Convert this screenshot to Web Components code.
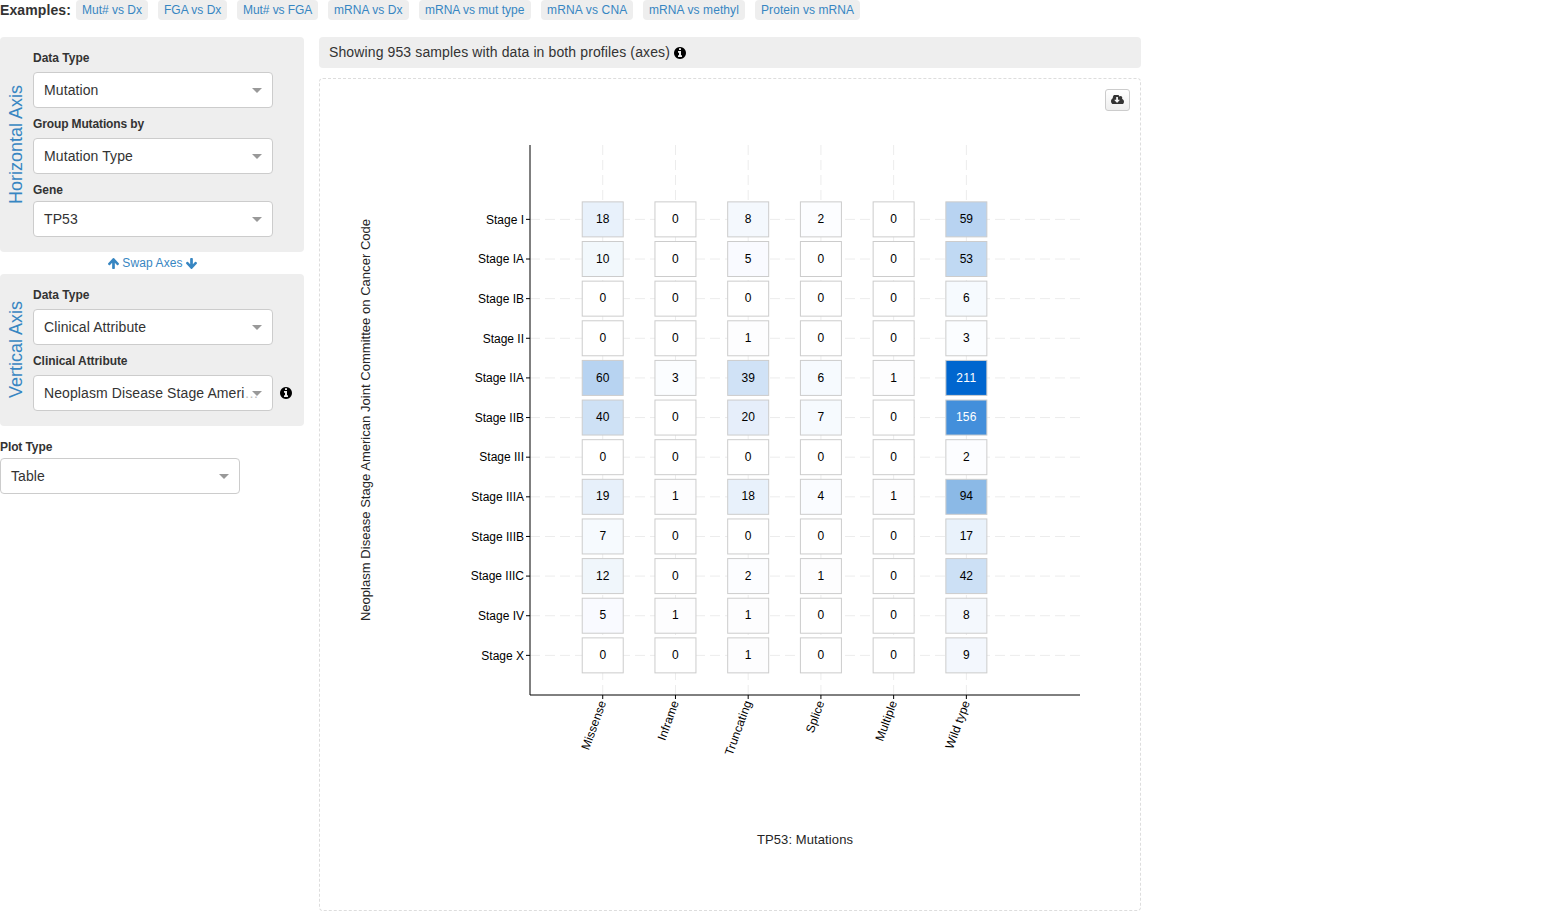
<!DOCTYPE html>
<html lang="en">
<head>
<meta charset="utf-8">
<title>Plots</title>
<style>
html,body{margin:0;background:#fff}
body{font-family:"Liberation Sans",Arial,sans-serif;font-size:14px;line-height:20px;color:#333;overflow:hidden}
</style>
</head>
<body>
<plots-tab></plots-tab>
<script>
const ICONS = {
  info: ['128 128 1536 1536','M1152 1376v-160q0-14-9-23t-23-9h-96v-512q0-14-9-23t-23-9h-320q-14 0-23 9t-9 23v160q0 14 9 23t23 9h96v320h-96q-14 0-23 9t-9 23v160q0 14 9 23t23 9h448q14 0 23-9t9-23zm-128-896v-160q0-14-9-23t-23-9h-192q-14 0-23 9t-9 23v160q0 14 9 23t23 9h192q14 0 23-9t9-23zm640 416q0 209-103 385.5t-279.5 279.5-385.5 103-385.5-103-279.5-279.5-103-385.5 103-385.5 279.5-279.5 385.5-103 385.5 103 279.5 279.5 103 385.5z'],
  cloud: ['-64 256 1920 1280','M1216 928q0-14-9-23t-23-9h-224v-352q0-13-9.5-22.5t-22.5-9.5h-192q-13 0-22.5 9.5t-9.5 22.5v352h-224q-13 0-22.5 9.5t-9.5 22.5q0 14 9 23l352 352q9 9 23 9t23-9l351-351q10-12 10-24zm640 224q0 159-112.5 271.5t-271.5 112.5h-1088q-185 0-316.5-131.5t-131.5-316.5q0-130 70-240t188-165q-2-30-2-43 0-212 150-362t362-150q156 0 285.5 87t188.5 231q71-62 166-62 106 0 181 75t75 181q0 76-41 138 130 31 213.5 135.5t83.5 238.5z'],
  arrow: ['118 192 1557 1472','M1675 971q0 51-37 90l-75 75q-38 38-91 38-54 0-90-38l-294-293v704q0 52-37.5 84.5t-90.5 32.5h-128q-53 0-90.5-32.5t-37.5-84.5v-704l-294 293q-36 38-90 38t-90-38l-75-75q-38-38-38-90 0-53 38-91l651-651q35-37 90-37 54 0 91 37l651 651q37 39 37 91z']
};
function define(name, html) {
  customElements.define(name, class extends HTMLElement {
    constructor() {
      super();
      const t = document.createElement('template');
      t.innerHTML = typeof html === 'function' ? html(this) : html;
      this.attachShadow({mode:'open'}).append(t.content.cloneNode(true));
    }
  });
}

define('fa-icon', el => {
  const [box, d] = ICONS[el.getAttribute('name')];
  return `<style>:host{display:inline-block;width:12px;height:12px;line-height:0;flex:none}
  svg{display:block;width:100%;height:100%;fill:currentColor}:host([down]) svg{transform:rotate(180deg)}</style>
  <svg viewBox="${box}" preserveAspectRatio="none"><path d="${d}"/></svg>`;
});

define('example-link', el => `<style>
:host{display:block;box-sizing:border-box;width:${el.getAttribute('width')}px;height:20px;padding-left:6px;margin-right:10px;border-radius:4px;background:#eee;color:#3786c2;font-size:12px;line-height:20px;white-space:nowrap;letter-spacing:${el.getAttribute('track')||0}px}
</style><slot></slot>`);

define('select-box', `<style>
:host{display:flex;box-sizing:border-box;width:240px;height:36px;border:1px solid #ccc;border-radius:4px;background:#fff;align-items:center;position:relative}
span{flex:1;min-width:0;padding-left:10px;overflow:hidden;white-space:nowrap;line-height:34px;letter-spacing:.1px}
i{position:absolute;right:10px;top:15px;border:5px solid transparent;border-top-color:#999;border-bottom:0}
</style><span><slot></slot></span><i></i>`);

define('select-field', el => `<style>
:host{display:block}
b{display:block;font-size:12px;line-height:18px;height:${el.getAttribute('gap')||23}px;letter-spacing:${el.getAttribute('track')||0}px}
div{display:flex;align-items:center}
fa-icon{margin-left:7px;color:#000}
</style><b>${el.getAttribute('label')}</b><div><select-box><slot></slot></select-box>${el.hasAttribute('info')?'<fa-icon name="info"></fa-icon>':''}</div>`);

define('axis-panel', el => `<style>
:host{display:flex;box-sizing:border-box;width:304px;background:#eee;border-radius:4px;padding:12px 0 15px}
.t{width:33px;box-sizing:border-box;padding:${el.getAttribute('shift')}px 2px 0 0;display:flex;align-items:center;justify-content:center}
.t span{writing-mode:vertical-rl;transform:rotate(180deg);font-size:18px;line-height:20px;color:#3786c2;white-space:nowrap}
.f{display:flex;flex-direction:column;gap:7px}
</style><div class="t"><span>${el.getAttribute('label')}</span></div><div class="f"><slot></slot></div>`);

/* Table plot: mutation types (columns) against cancer stages (rows) */
const COLS = ['Missense','Inframe','Truncating','Splice','Multiple','Wild type'];
const ROWS = [
 ['Stage I',18,0,8,2,0,59],['Stage IA',10,0,5,0,0,53],['Stage IB',0,0,0,0,0,6],['Stage II',0,0,1,0,0,3],
 ['Stage IIA',60,3,39,6,1,211],['Stage IIB',40,0,20,7,0,156],['Stage III',0,0,0,0,0,2],['Stage IIIA',19,1,18,4,1,94],
 ['Stage IIIB',7,0,0,0,0,17],['Stage IIIC',12,0,2,1,0,42],['Stage IV',5,1,1,0,0,8],['Stage X',0,0,1,0,0,9]];
const FILL = {0:'#fff',1:'#fdfdfe',2:'#fcfdff',3:'#fbfdff',4:'#fafcff',5:'#f9faff',6:'#f6fafe',7:'#f6fafe',8:'#f4f8fd',9:'#f3f7fd',
 10:'#f2f8fc',12:'#f0f6fb',17:'#e9f2fb',18:'#e8f1fb',19:'#e7f0fa',20:'#e6eefa',39:'#d0e2f6',40:'#cee1f5',42:'#cce0f5',
 53:'#c0d9f3',59:'#b8d3f1',60:'#b7d3f1',94:'#8bb9e6',156:'#438fdb',211:'#0066cf'};
define('table-plot', () => {
  const X = i => 530 + (i+1)*72.727, Y = i => 695 - (12-i)*39.636;
  let g = '';
  COLS.forEach((c,i) => {
    g += `<path class="grid" d="M${X(i)} 145V695"/><path class="tick" d="M${X(i)} 695v4"/>
    <text class="col" text-anchor="end" transform="translate(${X(i)+3.7} 702.3) rotate(-70)" y="0">${c}</text>`;
  });
  ROWS.forEach((r,i) => {
    g += `<path class="grid" d="M530 ${Y(i)}H1080"/><path class="tick" d="M530 ${Y(i)}h-4"/>
    <text text-anchor="end" x="524" y="${Y(i)+4.3}">${r[0]}</text>`;
  });
  g += '<path class="axis" d="M530 145V695M530 695H1080"/>';
  ROWS.forEach((r,i) => r.slice(1).forEach((v,j) => {
    g += `<rect x="${X(j)-20.5}" y="${Y(i)-17.5}" width="41" height="35" fill="${FILL[v]}"/>
    <text text-anchor="middle" x="${X(j)}" y="${Y(i)+3.6}"${v>150?' fill="#fff"':''}>${v}</text>`;
  }));
  return `<style>:host{display:block;width:820px;height:831px}
  svg{display:block}text{font-size:12px;fill:#000}text[fill]{fill:#fff;letter-spacing:.3px}text.title{font-size:13px;fill:#252525}
  .col{letter-spacing:.12px}
  .grid{stroke:#ececec;stroke-dasharray:10 5;fill:none}.tick,.axis{stroke:#000;fill:none}rect{stroke:#ccc}</style>
  <svg width="820" height="831" viewBox="320 79 820 831">${g}
  <text class="title" text-anchor="middle" x="805" y="844" letter-spacing=".1">TP53: Mutations</text>
  <text class="title" text-anchor="middle" letter-spacing=".03" transform="translate(370 420) rotate(-90)">Neoplasm Disease Stage American Joint Committee on Cancer Code</text></svg>`;
});

define('download-button', `<style>
:host{box-sizing:border-box;width:25px;height:22px;border:1px solid #ccc;border-radius:3px;background:linear-gradient(#fff,#eee);display:flex;justify-content:center;color:#333}
fa-icon{width:13px;height:9.6px;margin-top:4.5px}
</style><fa-icon name="cloud"></fa-icon>`);

define('plots-tab', `<style>
:host{display:block;height:911px}
header{display:flex;height:20px;margin-bottom:17px}
header b{width:76px;white-space:nowrap;letter-spacing:.1px}
main{display:flex;gap:15px;align-items:flex-start}
aside{width:304px}
.swap{height:22px;display:flex;justify-content:center;align-items:center;gap:3px;font-size:12px;color:#3786c2;padding-left:1px;box-sizing:border-box}
.swap span{letter-spacing:.1px}
.swap fa-icon{width:11px;height:11px}
.plot{margin-top:12px}
.more{color:#bbb}
section{width:822px}
.count{height:31px;box-sizing:border-box;border-radius:4px;background:#eee;padding:0 0 1px 10px;display:flex;align-items:center;gap:4px;margin-bottom:10px}
.count span{letter-spacing:.12px}
.count fa-icon{color:#000;margin-top:2px}
.chart{box-sizing:border-box;height:833px;border:1px dashed #ddd;border-radius:4px;position:relative}
download-button{position:absolute;right:10px;top:10px}
</style>
<header><b>Examples:</b><example-link width="72">Mut# vs Dx</example-link><example-link width="69">FGA vs Dx</example-link><example-link width="81" track="-.07">Mut# vs FGA</example-link><example-link width="81" track=".06">mRNA vs Dx</example-link><example-link width="112">mRNA vs mut type</example-link><example-link width="92" track=".16">mRNA vs CNA</example-link><example-link width="102" track=".09">mRNA vs methyl</example-link><example-link width="105" track=".07">Protein vs mRNA</example-link></header>
<main><aside>
<axis-panel label="Horizontal Axis" shift="4"><select-field label="Data Type">Mutation</select-field><select-field label="Group Mutations by" track="-.13">Mutation Type</select-field><select-field label="Gene" gap="20">TP53</select-field></axis-panel>
<div class="swap"><fa-icon name="arrow"></fa-icon><span>Swap Axes</span><fa-icon name="arrow" down></fa-icon></div>
<axis-panel label="Vertical Axis" shift="3"><select-field label="Data Type">Clinical Attribute</select-field><select-field label="Clinical Attribute" track="-.06" info>Neoplasm Disease Stage Ameri<span class="more">…</span></select-field></axis-panel>
<div class="plot"><select-field label="Plot Type" gap="20" track="-.1">Table</select-field></div>
</aside><section>
<div class="count"><span>Showing 953 samples with data in both profiles (axes)</span><fa-icon name="info"></fa-icon></div>
<div class="chart"><table-plot></table-plot><download-button></download-button></div>
</section></main>`);
</script>
</body>
</html>
